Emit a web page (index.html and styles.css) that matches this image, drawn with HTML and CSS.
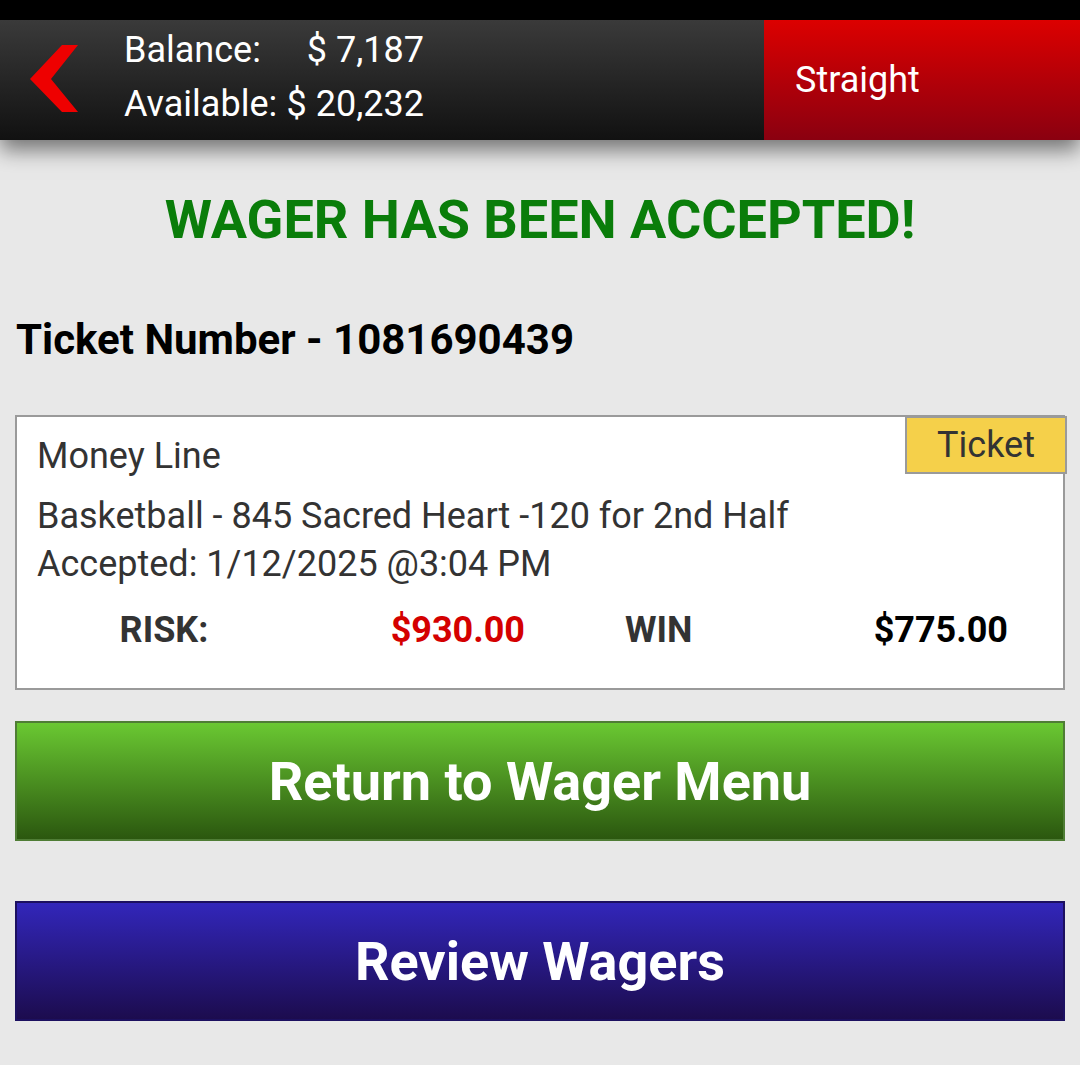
FILE: index.html
```html
<!DOCTYPE html>
<html>
<head>
<meta charset="utf-8">
<link rel="stylesheet" href="styles.css">
</head>
<body>
<div class="statusbar"></div>
<header class="topbar">
  <div class="back">
    <svg width="50" height="70" viewBox="0 0 50 70"><polygon points="34,0 50,0 23,34 50,67 34,67 2,34" fill="#ee0000"/></svg>
  </div>
  <div class="balances">
    <div class="bal-row"><span>Balance:</span><span>$ 7,187</span></div>
    <div class="bal-row"><span>Available:</span><span>$ 20,232</span></div>
  </div>
  <div class="type">Straight</div>
</header>
<main class="content">
  <h1 class="accepted">WAGER HAS BEEN ACCEPTED!</h1>
  <h2 class="ticket-no">Ticket Number - 1081690439</h2>
  <section class="card">
    <div class="badge">Ticket</div>
    <div class="line type-line">Money Line</div>
    <div class="line desc">Basketball - 845 Sacred Heart -120 for 2nd Half</div>
    <div class="line">Accepted: 1/12/2025 @3:04 PM</div>
    <div class="amounts">
      <span class="lbl risk-l">RISK:</span>
      <span class="val risk">$930.00</span>
      <span class="lbl win-l">WIN</span>
      <span class="val win">$775.00</span>
    </div>
  </section>
  <button class="btn green">Return to Wager Menu</button>
  <button class="btn blue">Review Wagers</button>
</main>
</body>
</html>
```
FILE: styles.css
```css
html, body {
  margin: 0;
  padding: 0;
  background: #e8e8e8;
  font-family: Roboto, "Noto Sans", sans-serif;
}
.statusbar {
  height: 20px;
  background: #000;
}
.topbar {
  height: 120px;
  display: flex;
  align-items: stretch;
  background: linear-gradient(#3a3a3a, #111111);
  box-shadow: 0 10px 20px rgba(0,0,0,0.5);
  position: relative;
  z-index: 1;
}
.back {
  width: 124px;
  display: flex;
  align-items: center;
  padding-left: 28px;
  box-sizing: border-box;
}
.balances {
  width: 300px;
  display: flex;
  flex-direction: column;
  justify-content: center;
  gap: 4px;
  padding-bottom: 6px;
  box-sizing: border-box;
  color: #fff;
  font-size: 36px;
  line-height: 50px;
}
.bal-row {
  display: flex;
  justify-content: space-between;
  white-space: nowrap;
}
.type {
  margin-left: auto;
  width: 316px;
  background: linear-gradient(#dc0000, #8a0010);
  color: #fff;
  font-size: 36px;
  display: flex;
  align-items: center;
  padding-left: 31px;
  box-sizing: border-box;
}
.content {
  padding: 0 15px;
}
.accepted {
  margin: 50px 0 0;
  text-align: center;
  color: #0a7d0a;
  font-size: 54px;
  font-weight: 700;
  line-height: 60px;
}
.ticket-no {
  margin: 65px 0 0;
  font-size: 42px;
  font-weight: 700;
  line-height: 50px;
  color: #000;
  padding-left: 1px;
}
.card {
  position: relative;
  margin-top: 50px;
  background: #fff;
  border: 2px solid #9a9a9a;
  padding: 15px 20px 38px;
  color: #333;
  font-size: 36px;
}
.badge {
  position: absolute;
  top: -1px;
  right: -4px;
  width: 162px;
  height: 58px;
  box-sizing: border-box;
  background: #f5d04a;
  border: 2px solid #9a9a9a;
  color: #333;
  font-size: 36px;
  display: flex;
  align-items: center;
  justify-content: center;
}
.line {
  line-height: 48px;
}
.type-line {
  margin-bottom: 12px;
}
.amounts {
  display: grid;
  grid-template-columns: 254px 234px 1fr 1fr;
  margin-top: 22px;
  font-weight: 700;
  line-height: 40px;
}
.lbl { color: #333; }
.risk-l { text-align: center; }
.risk { text-align: right; color: #d40000; }
.win-l { padding-left: 100px; }
.win { text-align: right; color: #000; padding-right: 35px; }
.btn {
  display: block;
  width: 100%;
  margin: 0;
  color: #fff;
  font-family: Roboto, "Noto Sans", sans-serif;
  font-weight: 700;
  font-size: 54px;
  height: 120px;
  cursor: pointer;
}
.green {
  margin-top: 31px;
  background: linear-gradient(#6ac832, #2b570f);
  border: 2px solid #4f7d35;
}
.blue {
  margin-top: 60px;
  background: linear-gradient(#3226ba, #1c0c4e);
  border: 2px solid #1c1060;
}
```
